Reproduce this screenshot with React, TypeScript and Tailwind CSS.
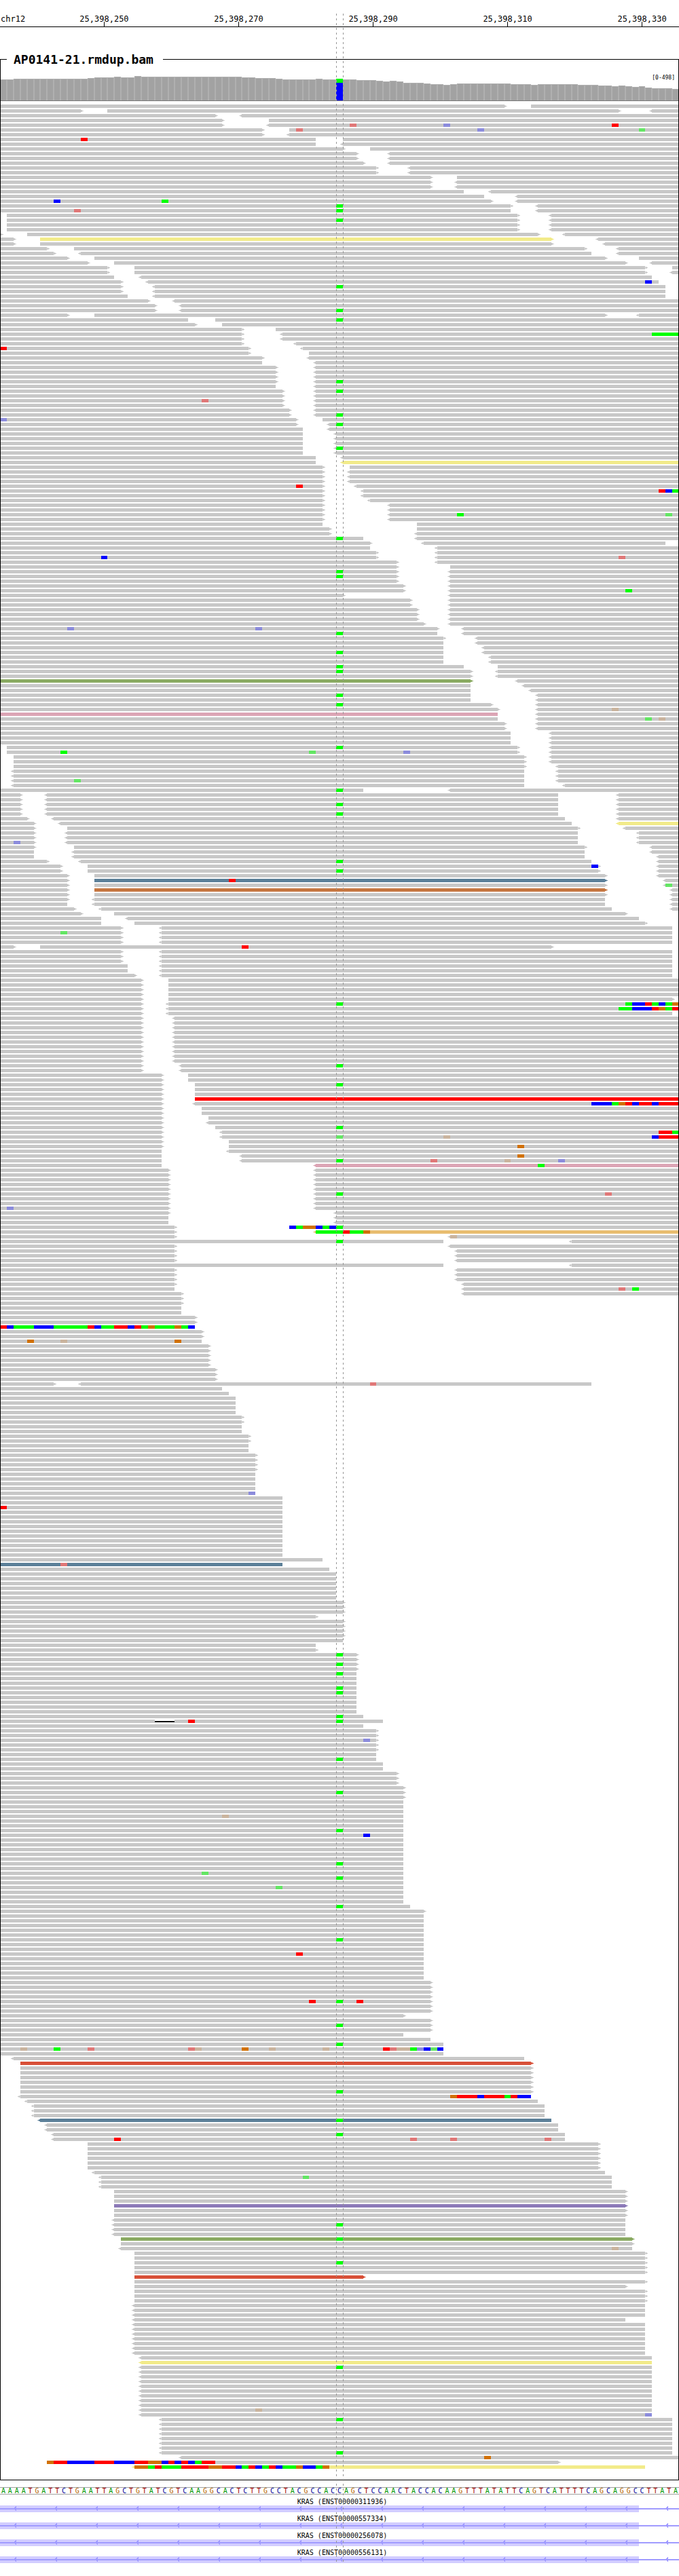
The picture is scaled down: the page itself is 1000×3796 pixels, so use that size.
import React from "react";

const COLUMNS = 101;
const FIRST_POSITION = 25398235;
const AXIS = "grid grid-cols-[repeat(101,minmax(0,1fr))]";

const TICKS = [25398250, 25398270, 25398290, 25398310, 25398330];

const SEQUENCE =
  "AAAATGATTCTGAATTAGCTGTATCGTCAAGGCACTCTTGCCTACGCCACC" +
  "AGCTCCAACTACCACAAGTTTATATTCAGTCATTTTCAGCAGGCCTTATA";

const TRANSCRIPTS = [
  "ENST00000311936",
  "ENST00000557334",
  "ENST00000256078",
  "ENST00000556131",
];

// [number of neighbouring positions, bar height]
const COVERAGE: [number, number][] = [
  [2, 31], [11, 32], [1, 33], [3, 34], [1, 35], [2, 34], [1, 36], [15, 35],
  [2, 34], [3, 33], [1, 32], [5, 31], [1, 32], [2, 31], [1, 32], [2, 31],
  [3, 30], [1, 29], [1, 28], [1, 29], [1, 28], [3, 26], [1, 25], [2, 24],
  [1, 23], [1, 24], [8, 25], [3, 24], [1, 23], [6, 24], [3, 23], [2, 22],
  [1, 21], [1, 22], [1, 21], [1, 20], [1, 21], [1, 19], [3, 18], [1, 17],
];
const VARIANT_INDEX = 50;

/*
 * One entry per packed row of aligned reads. "a-b" is a read from column a up
 * to column b (open end: to the edge), "<" and ">" mark the strand, ":name"
 * tints the read, "@nACGT" lists mismatches from column n on (lower case: low
 * base quality), and a leading "nx" repeats the row.
 */
const ROWS = `
0-75> 79-
0-12> 16-92> <97-
0-32> <36-
0-33> 40-
0-33> <40- @52t @66c @91T
0-39> 43- @44t @71c @95a
0-39> <43-
0-47 51- @12T
0-47 <51-
0-51> 55-
2x 0-53> <58-
0-54> <58-
2x 0-56> <61-
0-64> 68-
2x 0-64> <68-
0-69 <73-
0-72 <77-
0-73> <77- @8C @24A
0-76> <80- @50A
0-76 <80- @11t @50A
1-77> <82-
1-77> <82- @50A
2x 1-77> <82-
0-0> 4-80> <84-
0-2> 6-82>:yellow <89-
0-2> 6-82> <90-
0-7> 11-87> <92-
0-8> <12-88 <92-
0-10> 14-90> 95-
0-13> 17-93> <97-
0-16> 20-96> 100-
0-16> 20-96> <100-
0-17 <21-97
0-18> <22-98 @96C
0-18> <23-99 @50A
0-18> <23-99
0-19 <23-99
0-22> <26-
0-23> <27-
0-23> <27- @50A
0-10> 14-90> <95-
0-28 32- @50A
0-29> 33-
0-36> 41-
0-36> <42- @97AAAA
0-36> <42-
0-36> <44-
0-37> <45- @0T
0-37> 46-
0-39> <46-
0-39 <47-
3x 0-41> <47-
0-41> <47- @50A
0-41 <47-
0-42> <47- @50A
0-42> <47-
0-42> <47- @30t
0-42> <47-
0-43> <47-
0-43> <47- @50A
0-44> 48- @0c
0-44> <49- @50A
0-45 <49-
3x 0-45 <50-
0-45 <50- @50A
0-45 <50-
0-47 <51-
0-47 <51-:yellow
0-48> 52-
3x 0-48> <52-
0-48> <53- @44T
0-48> <54- @98TCA
0-48> <54-
0-48> <55-
2x 0-48> <58-
0-48> <58- @68A @99a
0-48> <58-
0-48 62-
0-49> 62-
0-49> <62-
0-54 <62- @50A
0-55> <63-99
0-55 <65-
0-56> <65-
0-56> <65- @15C @92t
0-59> <65-
0-59> 67-
2x 0-59> <67- @50A
0-59> <67-
0-60> <67-
0-60> <67- @93A
0-51> <67-
2x 0-61> <67-
3x 0-62> <67-
0-63> <67-
0-65> <69- @10c @38c
0-65 <69- @50A
0-66> <71-
0-66 <71-
0-66 <72-
0-66 <72- @50A
2x 0-66 <73-
0-69 74- @50A
0-70> <74- @50A
0-70> <74-
0-70>:olive <77-
0-70 <78-
0-70 <79-
0-70 <80- @50A
0-70 <80-
0-73> <80- @50A
0-74> <80- @91g
0-74:pink <80-
0-74 <80- @96a @98g
2x 0-75> <80-
3x 0-76 <82-
1-77> <82- @50A
1-77> <82- @9A @46a @60c
2x 2-78> <82-
2-78> <83-
2x <2-78 <83-
<2-78 <83- @11a
<2-78 <84-
0-54 <67- @50A
2x 0-3> <7-83 <92-
0-3> <7-83 <92- @50A
0-3> <7-83 <92-
0-3> <7-83 <92- @50A
0-4> <8-84 <92-
0-5> <9-85 <92-:yellow
0-5> 10-86> <93-
2x 0-5> <10-86 <95-
0-5> <10-86 <95- @2c
0-5> 11-87> <97-
0-5 <11-87 <97-
0-5 <11-87 <98-
0-7> <12-88 <98- @50A
0-9> 13-89> <98- @88C
0-9> 13-89> <98- @50A
0-10> 14-90> <98-
0-10> 14-90>:steel <99- @34T
0-10> 14-90> <99- @99a
0-10> 14-90>:copper <100-
0-10> 14-90> <100-
0-10> <14-90 <100-
0-10 <14-90 <100-
0-11> <15-91 <100-
0-12> 17-93>
0-15 <19-95
0-15 20-96>
0-18> <24-100
0-18> <24-100 @9a
2x 0-18> <24-100
0-2> 6-82> @36T
3x 0-18> <24-100
2x 0-19 <24-100
0-20> <24-100
4x 0-21> 25-
0-21> 25-100>
0-21> <25- @50A @93ACCTACAG
0-21> <25- @92AACCCTGAT
0-21> <25-100
10x 0-21> <26-
0-21> <27- @50A
0-21> <27-
2x 0-24> 28-
0-24> 29- @50A
2x 0-24> 29-
0-24> 29-:red
0-24> <29- @88CCCAGTCTTCTTT
2x 0-24> 30-
0-24> 31-
0-24> <31-
0-24> 32- @50A
0-24> <33- @98TTA
0-24> <33- @50a @66g @97CTTT
0-24> 34-
0-24> 34- @77G
0-24 <34-
0-24 <36- @77G
0-24 <36- @50A @64t @75g @83c
0-24 <47-:pink @80A
5x 0-25> <47-
0-25> <47- @50A @90t
2x 0-25> <47-
0-25> <47- @1c
0-25> <50-
2x 0-25 <50-
0-26> 43- @43CAGGCACA
0-26> <47-:sand @47AAAATAAG
0-26> <67- @67g
0-66 <85- @50A
0-26> <67-
3x 0-26> <68-
0-66 <85-
3x 0-26> <68-
0-26> <69-
0-26 <69- @92t @94A
0-27> <69-
2x 0-27>
2x 0-27
2x 0-29>
0-29 @0TCAAACCCAAAAATCAATTCTAGAAAGAC
2x 0-30>
0-30 @4G @9g @26G
5x 0-31>
3x 0-32>
0-8> <12-88 @55t
0-33
0-34
4x 0-35
2x 0-36>
2x 0-36
2x 0-37>
2x 0-37
4x 0-38>
4x 0-38
0-38 @37c
2x 0-42
0-42 @0T
10x 0-42
0-48
0-42:steel @9t
0-49
6x 0-50
3x 0-51>
0-47>
4x 0-51>
0-51
0-47
0-47>
0-53> @50A
0-53>
0-53> @50A
0-53>
0-53 @50A
2x 0-53
2x 0-53 @50A
4x 0-53
0-54 @50A
0-23 23-26:gap 26-57 @28T @50A
0-54
2x 0-56>
0-56> @54c
2x 0-56>
0-56
0-56 @50A
2x 0-57
3x 0-59>
0-60>
0-60> @50A
0-60>
3x 0-60
0-60 @33g
2x 0-60
0-60 @50A
0-60 @54C
5x 0-60
0-60 @50A
0-60
0-60 @30a
0-60 @50A
0-60
0-60 @41a
3x 0-60
0-61 @50A
0-63>
5x 0-63
0-63 @50A
2x 0-63
0-63 @44T
5x 0-63
4x 0-64>
0-64> @46T @50A @53T
2x 0-64>
0-60>
0-64>
0-64> @50A
0-64>
0-60
0-64
0-66 @50A
0-66 @3g @8A @13t @28tg @36G @40g @48g @57TtggAcCaC
0-66
<2-78
3-79>:brick
5x 3-79>
3-79> @50A
<3-79 @67GTTTCTTTATCC
<4-80
3x <5-81
<6-82:steel @50A
2x <7-83
<8-84 @50A
<8-84 @17T @61t @67t @81t
6x 13-89>
<14-90
<15-91 @45a
2x <15-91
3x 17-93>
17-93>:violet
2x 17-93>
<17-93
<17-93 @50A
2x <17-93
18-94>:olive @50A
18-94>
<18-94 @91g
2x 20-96>
20-96> @50A
2x 20-96>
20-54>:brick
20-96>
20-93>
3x 20-96>
3x <20-96
<20-93
7x <20-96
<21-97
<21-97:yellow
<21-97 @50A
8x <21-97
<21-97 @38g
<21-97 @96c
<24-100 @50A
6x <24-100
<24-100 @50A
<27- @72G
7-83> @7GTTCCCCTTTCCCTTGGCTCTCATT
<20-96:yellow @20GGATAAATTTTGGTTCATCATCAAGCCAG
`;

const TINTS: Record<string, string> = {
  plain: "bg-[#c8c8c8]",
  yellow: "bg-[#f2eb8a]",
  olive: "bg-[#8aaa62]",
  pink: "bg-[#dca5b5]",
  steel: "bg-[#5c8099]",
  copper: "bg-[#c57641]",
  red: "bg-[#ff0000]",
  sand: "bg-[#e8bd70]",
  brick: "bg-[#d85038]",
  violet: "bg-[#8c7ab8]",
};

const BASES: Record<string, string> = {
  A: "bg-[#00ff00]",
  C: "bg-[#0000ff]",
  G: "bg-[#d17105]",
  T: "bg-[#ff0000]",
  a: "bg-[#64e664]",
  c: "bg-[#8c8cdc]",
  g: "bg-[#cab49e]",
  t: "bg-[#e07878]",
};

const LETTERS: Record<string, string> = {
  A: "text-[#009600]",
  C: "text-[#000096]",
  G: "text-[#b46400]",
  T: "text-[#a00000]",
};

interface Read {
  start: number;
  end: number;
  left: boolean;
  right: boolean;
  tint: string;
}

interface Mismatch {
  column: number;
  base: string;
}

interface Row {
  reads: Read[];
  mismatches: Mismatch[];
}

function parseRows(source: string): Row[] {
  const rows: Row[] = [];
  for (const line of source.trim().split("\n")) {
    const row: Row = { reads: [], mismatches: [] };
    let count = 1;
    for (const token of line.split(" ")) {
      const read = /^(<?)(\d+)-(\d*)(>?)(?::(\w+))?$/.exec(token);
      const bases = /^@(\d+)(\w+?)$/.exec(token);
      if (read) {
        row.reads.push({
          start: Number(read[2]),
          end: read[3] ? Number(read[3]) : COLUMNS,
          left: read[1] === "<",
          right: read[4] === ">",
          tint: read[5] ?? "plain",
        });
      } else if (bases) {
        [...bases[2]].forEach((base, i) =>
          row.mismatches.push({ column: Number(bases[1]) + i, base }),
        );
      } else {
        count = parseInt(token, 10);
      }
    }
    for (let i = 0; i < count; i++) rows.push(row);
  }
  return rows;
}

const PACKED_ROWS = parseRows(ROWS);
const DEPTHS = COVERAGE.flatMap(([count, height]) => Array<number>(count).fill(height));

function Ruler() {
  return (
    <header className={`${AXIS} h-10 border-b border-black pt-5 text-xs leading-4`}>
      <div className="col-start-1 row-start-1 w-0 pl-px whitespace-nowrap">chr12</div>
      {TICKS.map((position) => (
        <div
          key={position}
          className="row-start-1 flex flex-col items-center"
          style={{ gridColumnStart: position - FIRST_POSITION + 1 }}
        >
          <span className="whitespace-nowrap">{position.toLocaleString("en-US")}</span>
          <span className="-mt-1 h-[7px] w-px shrink-0 bg-black" />
        </div>
      ))}
    </header>
  );
}

function Coverage() {
  return (
    <div className="relative">
      <div className={`${AXIS} h-[51px] items-end border-b border-[#787878]`}>
        {DEPTHS.map((height, i) =>
          i === VARIANT_INDEX ? (
            <div key={i}>
              <div className="h-[6px] bg-[#00ff00]" />
              <div className="h-[26px] bg-[#0000ff]" />
            </div>
          ) : (
            <div
              key={i}
              className="border-x border-t border-[#b0b0b0] bg-[#a2a2a2]"
              style={{ height }}
            />
          ),
        )}
      </div>
      <span className="absolute top-[13px] right-[6px] text-[8px] leading-2">[0-498]</span>
    </div>
  );
}

function ReadBar({ read }: { read: Read }) {
  const gridColumn = `${read.start + 1} / span ${Math.max(1, read.end - read.start)}`;
  if (read.tint === "gap") {
    return <div className="row-start-1 mt-[2px] h-[2px] bg-black" style={{ gridColumn }} />;
  }
  const tint = TINTS[read.tint];
  const width = read.end === read.start ? "w-px" : "w-full";
  return (
    <div className={`relative row-start-1 ${width} ${tint}`} style={{ gridColumn }}>
      {read.left && (
        <span
          className={`absolute inset-y-0 right-full w-1 [clip-path:polygon(0_2px,2px_2px,2px_1px,4px_1px,4px_4px,2px_4px,2px_3px,0_3px)] ${tint}`}
        />
      )}
      {read.right && (
        <span
          className={`absolute inset-y-0 left-full w-1 [clip-path:polygon(0_1px,2px_1px,2px_2px,4px_2px,4px_3px,2px_3px,2px_4px,0_4px)] ${tint}`}
        />
      )}
    </div>
  );
}

function Alignments() {
  return (
    <div className="flex flex-col gap-[2px] pt-[5px] pb-4">
      {PACKED_ROWS.map((row, i) => (
        <div key={i} className={`${AXIS} h-[5px] grid-rows-[5px]`}>
          {row.reads.map((read) => (
            <ReadBar key={read.start} read={read} />
          ))}
          {row.mismatches.map(({ column, base }) => (
            <div
              key={column}
              className={`relative row-start-1 ${BASES[base]}`}
              style={{ gridColumnStart: column + 1 }}
            />
          ))}
        </div>
      ))}
    </div>
  );
}

function ReferenceSequence() {
  return (
    <div
      className={`${AXIS} mt-[10px] h-[11px] border-y border-[#a0a0a0] text-center text-[10px] leading-[9px] font-normal`}
    >
      {[...SEQUENCE].map((base, i) => (
        <span key={i} className={LETTERS[base]}>
          {base}
        </span>
      ))}
    </div>
  );
}

function Transcript({ id }: { id: string }) {
  return (
    <div>
      <p className="pt-1 pl-2 text-center text-[10px] leading-[11px]">KRAS ({id})</p>
      <div className={`${AXIS} relative h-[10px] overflow-hidden`}>
        <div className="col-span-95 col-start-1 row-start-1 h-[10px] bg-[#d2cdff]" />
        <div className="col-span-full col-start-1 row-start-1 mt-1 h-[2px] bg-[#a09bff]" />
        <svg className="absolute inset-0 h-full w-full" aria-hidden="true">
          <defs>
            <pattern id={`strand-${id}`} width="60" height="10" patternUnits="userSpaceOnUse">
              <path
                d="M20 4h1V3h1V2h1V1h1v7h-1V7h-1V6h-1V5h-1z"
                fill="#a09bff"
                shapeRendering="crispEdges"
              />
            </pattern>
          </defs>
          <rect width="100%" height="10" fill={`url(#strand-${id})`} />
        </svg>
      </div>
    </div>
  );
}

const GUIDE =
  "pointer-events-none absolute top-5 bottom-0 w-px bg-[repeating-linear-gradient(to_bottom,#969696_0_3px,transparent_3px_7px)]";

export default function App() {
  return (
    <main className="relative overflow-hidden bg-white font-['DejaVu_Sans_Mono',monospace] text-black">
      <Ruler />
      <section className="relative mt-[37px]">
        <fieldset className="min-w-0 border-y border-black">
          <legend className="ml-[10px] w-[230px] px-[10px]">
            <h1 className="text-lg leading-[21px] font-bold whitespace-nowrap">
              AP0141-21.rmdup.bam
            </h1>
          </legend>
          <Coverage />
          <Alignments />
        </fieldset>
        <div className="pointer-events-none absolute inset-x-0 top-[10px] bottom-0 border-x border-black" />
      </section>
      <ReferenceSequence />
      <section className="mt-px">
        {TRANSCRIPTS.map((id) => (
          <Transcript key={id} id={id} />
        ))}
      </section>
      <div className={`${GUIDE} left-[calc(100%*50/101)]`} />
      <div className={`${GUIDE} left-[calc(100%*51/101)]`} />
    </main>
  );
}
